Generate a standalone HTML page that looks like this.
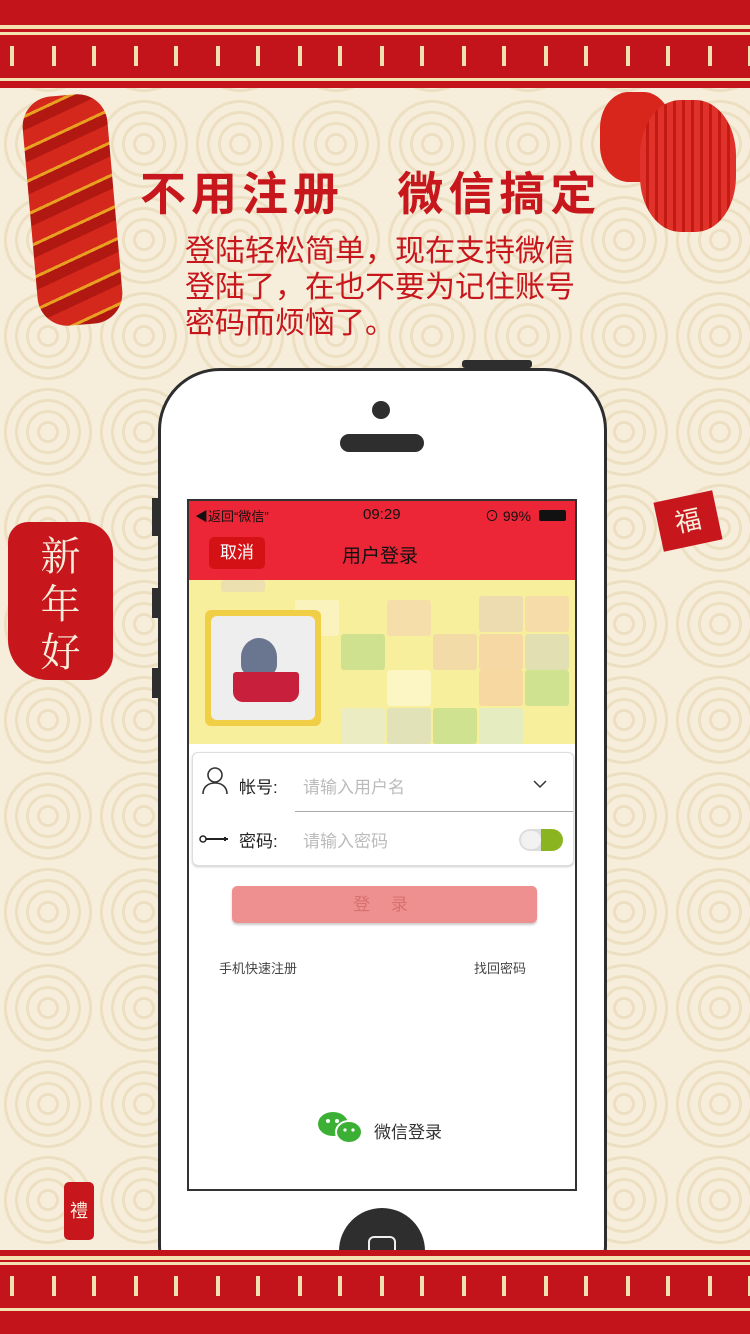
<!DOCTYPE html>
<html><head><meta charset="utf-8"><style>
*{margin:0;padding:0;box-sizing:border-box}
html{width:750px;height:1334px;overflow:hidden}
body{width:750px;height:1334px;overflow:hidden;position:relative;font-family:"Liberation Sans","Noto Sans CJK SC",sans-serif;
background-color:#f6eedb;
background-image:radial-gradient(circle at 50% 50%, transparent 0 8px,#ecdfc2 8px 11px,transparent 11px 19px,#ecdfc2 19px 22px,transparent 22px 30px,#ecdfc2 30px 33px,transparent 33px 41px,#ecdfc2 41px 44px,transparent 44px);
background-size:96px 96px;}
.band{position:absolute;left:0;width:750px;background:#c3141c}
.fret{position:absolute;left:0;width:750px;height:40px;
background:
linear-gradient(#c3141c 0 10px,transparent 10px 30px,#c3141c 30px) ,
repeating-linear-gradient(90deg,transparent 0 10px,#f3e2b0 10px 14px,transparent 14px 52px,#f3e2b0 52px 56px,transparent 56px 82px),
#c3141c}
.line{position:absolute;left:0;width:750px;height:4px;background:#f3e2b0}
.abs{position:absolute}
.phone{position:absolute;left:158px;top:368px;width:449px;height:940px;background:#fff;border:3px solid #2e2e2e;border-radius:62px}
.screen{position:absolute;left:187px;top:499px;width:390px;height:692px;background:#fff;border:2px solid #333;overflow:hidden}
.tile{position:absolute;width:44px;height:36px;border-radius:3px}
</style></head><body>
<div class="band" style="top:0;height:88px"></div>
<div class="line" style="top:25px"></div>
<div class="fret" style="top:36px"></div>
<div class="line" style="top:32px;height:3px"></div>
<div class="line" style="top:78px;height:3px"></div>
<div class="abs" style="left:30px;top:95px;width:85px;height:230px;background:repeating-linear-gradient(160deg,#d4281c 0 16px,#e8a020 16px 19px,#b21812 19px 30px);border-radius:30px;transform:rotate(-5deg)"></div>
<div class="abs" style="left:600px;top:92px;width:72px;height:90px;border-radius:40%;background:#d8261c"></div>
<div class="abs" style="left:640px;top:100px;width:96px;height:132px;border-radius:42%;background:repeating-linear-gradient(90deg,#e0322a 0 6px,#c41a14 6px 9px)"></div>
<div class="abs" style="left:140px;top:158px;font-size:46px;font-weight:bold;color:#c8161d;letter-spacing:5px;white-space:nowrap">不用注册&nbsp;&nbsp;&nbsp;微信搞定</div>
<div class="abs" style="left:185px;top:234px;font-size:30px;line-height:36px;color:#c8161d;width:395px">登陆轻松简单，现在支持微信登陆了，在也不要为记住账号密码而烦恼了。</div>
<div class="abs" style="left:8px;top:522px;width:105px;height:158px;background:#c8161d;border-radius:20px 30px 25px 40px;color:#f6eedb;font-size:40px;line-height:48px;text-align:center;padding-top:8px;font-family:'Noto Serif CJK SC',serif">新<br>年<br>好</div>
<div class="abs" style="left:658px;top:496px;width:60px;height:50px;background:#c8161d;transform:rotate(-12deg);color:#f6eedb;font-size:26px;text-align:center;line-height:50px">福</div>
<div class="abs" style="left:64px;top:1182px;width:30px;height:58px;background:#c8161d;border-radius:5px;color:#f6eedb;font-size:18px;text-align:center;line-height:58px">禮</div>
<div class="phone"></div>
<div class="abs" style="left:372px;top:401px;width:18px;height:18px;border-radius:50%;background:#2e2e2e"></div>
<div class="abs" style="left:340px;top:434px;width:84px;height:18px;border-radius:9px;background:#2e2e2e"></div>
<div class="abs" style="left:462px;top:360px;width:70px;height:8px;background:#2e2e2e;border-radius:3px"></div>
<div class="abs" style="left:152px;top:498px;width:7px;height:38px;background:#2e2e2e"></div>
<div class="abs" style="left:152px;top:588px;width:7px;height:30px;background:#2e2e2e"></div>
<div class="abs" style="left:152px;top:668px;width:7px;height:30px;background:#2e2e2e"></div>
<div class="abs" style="left:339px;top:1208px;width:86px;height:86px;border-radius:50%;background:#2e2e2e"></div>
<div class="abs" style="left:368px;top:1236px;width:28px;height:28px;border:2px solid #eee;border-radius:6px"></div>

<div class="screen">
  <div class="abs" style="left:0;top:0;width:390px;height:79px;background:#ec2637"></div>
  <div class="abs" style="left:6px;top:5px;font-size:13px;color:#111">◀返回“微信”</div>
  <div class="abs" style="left:174px;top:5px;font-size:15px;color:#111">09:29</div>
  <div class="abs" style="left:296px;top:5px;font-size:14px;color:#111">⊙ 99%</div>
  <div class="abs" style="left:350px;top:9px;width:27px;height:11px;background:#111;border-radius:2px"></div>
  <div class="abs" style="left:20px;top:36px;width:56px;height:32px;background:#d41216;border-radius:5px;color:#fff;font-size:17px;line-height:32px;text-align:center">取消</div>
  <div class="abs" style="left:153px;top:40px;font-size:19px;color:#111">用户登录</div>
  <div class="abs" style="left:0;top:79px;width:390px;height:164px;background:#f7ef9c">
    <div class="tile" style="left:32px;top:0;height:12px;background:#ece0b0"></div>
    <div class="tile" style="left:106px;top:20px;background:#fbf3bd"></div>
    <div class="tile" style="left:198px;top:20px;background:#f6deaa"></div>
    <div class="tile" style="left:290px;top:16px;background:#ecdcb0"></div>
    <div class="tile" style="left:336px;top:16px;background:#f6dca8"></div>
    <div class="tile" style="left:152px;top:54px;background:#cfe18e"></div>
    <div class="tile" style="left:244px;top:54px;background:#f2dba6"></div>
    <div class="tile" style="left:290px;top:54px;background:#f6d8a4"></div>
    <div class="tile" style="left:336px;top:54px;background:#e2e0b2"></div>
    <div class="tile" style="left:198px;top:90px;background:#fcf5c4"></div>
    <div class="tile" style="left:290px;top:90px;background:#f6d8a0"></div>
    <div class="tile" style="left:336px;top:90px;background:#cfe290"></div>
    <div class="tile" style="left:152px;top:128px;background:#ebecc2"></div>
    <div class="tile" style="left:198px;top:128px;background:#e2e2b8"></div>
    <div class="tile" style="left:244px;top:128px;background:#cfe290"></div>
    <div class="tile" style="left:290px;top:128px;background:#e4ecc0"></div>
    <div class="abs" style="left:16px;top:30px;width:116px;height:116px;background:#f0cf47;border-radius:6px;padding:6px"><div style="width:104px;height:104px;background:#eeeeee;border-radius:6px;position:relative">
      <div class="abs" style="left:30px;top:22px;width:36px;height:38px;background:#6a7590;border-radius:50% 50% 30% 30%"></div>
      <div class="abs" style="left:22px;top:56px;width:66px;height:30px;background:#c8203c;border-radius:3px 3px 10px 10px"></div>
    </div></div>
  </div>
  <div class="abs" style="left:3px;top:251px;width:382px;height:114px;border:1px solid #ddd;border-radius:6px;background:#fff;box-shadow:0 1px 2px #ccc"></div>
  <svg class="abs" style="left:12px;top:265px" width="28" height="30" viewBox="0 0 28 30"><circle cx="14" cy="9" r="7" fill="none" stroke="#333" stroke-width="1.6"/><path d="M2 28c0-7 5-11 12-11s12 4 12 11" fill="none" stroke="#333" stroke-width="1.6"/></svg>
  <div class="abs" style="left:50px;top:272px;font-size:17px;color:#222">帐号:</div>
  <div class="abs" style="left:114px;top:272px;font-size:17px;color:#bbb">请输入用户名</div>
  <svg class="abs" style="left:344px;top:278px" width="14" height="10"><path d="M1 2l6 6 6-6" fill="none" stroke="#333" stroke-width="1.5"/></svg>
  <div class="abs" style="left:106px;top:310px;width:278px;height:1px;background:#aaa"></div>
  <svg class="abs" style="left:10px;top:333px" width="32" height="10"><circle cx="4" cy="5" r="3" fill="none" stroke="#222" stroke-width="1.5"/><path d="M7 5h22M26 3v4" stroke="#222" stroke-width="2"/></svg>
  <div class="abs" style="left:50px;top:326px;font-size:17px;color:#222">密码:</div>
  <div class="abs" style="left:114px;top:326px;font-size:17px;color:#bbb">请输入密码</div>
  <div class="abs" style="left:330px;top:328px;width:44px;height:22px;border-radius:11px;background:linear-gradient(90deg,#ddd 50%,#8ab520 50%)"></div>
  <div class="abs" style="left:332px;top:330px;width:20px;height:18px;border-radius:9px;background:#f2f2f2"></div>
  <div class="abs" style="left:43px;top:385px;width:305px;height:37px;border-radius:5px;background:#ee9090;box-shadow:0 2px 2px #ccc;text-align:center;font-size:17px;line-height:37px;color:#d8706f;letter-spacing:8px">登 录</div>
  <div class="abs" style="left:30px;top:457px;font-size:13px;color:#444">手机快速注册</div>
  <div class="abs" style="left:285px;top:457px;font-size:13px;color:#444">找回密码</div>
  <svg class="abs" style="left:127px;top:609px" width="50" height="34"><ellipse cx="17" cy="14" rx="15" ry="12" fill="#3bb035"/><ellipse cx="33" cy="22" rx="13" ry="11" fill="#3bb035" stroke="#fff" stroke-width="2"/><circle cx="12" cy="11" r="2" fill="#fff"/><circle cx="21" cy="11" r="2" fill="#fff"/><circle cx="29" cy="20" r="1.6" fill="#fff"/><circle cx="37" cy="20" r="1.6" fill="#fff"/></svg>
  <div class="abs" style="left:185px;top:617px;font-size:17px;color:#333">微信登录</div>
</div>
<div class="band" style="top:1250px;height:84px"></div>
<div class="line" style="top:1256px"></div>
<div class="fret" style="top:1266px"></div>
<div class="line" style="top:1262px;height:3px"></div>
<div class="line" style="top:1308px;height:3px"></div>
</body></html>
